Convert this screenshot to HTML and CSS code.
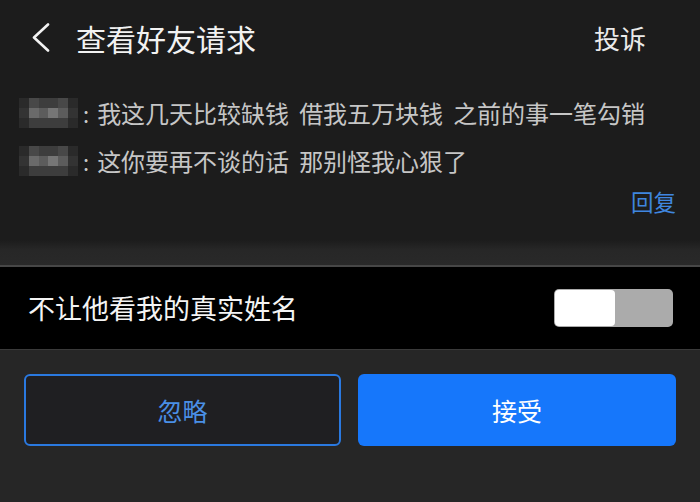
FILE: index.html
```html
<!DOCTYPE html>
<html lang="zh-CN">
<head>
<meta charset="utf-8">
<title>查看好友请求</title>
<link rel="stylesheet" href="styles.css">
</head>
<body>
<div class="page">
  <header class="header">
    <svg class="back" width="20" height="30" viewBox="0 0 20 30" aria-hidden="true">
      <polyline points="17,1.5 3,14.5 17,27.5" fill="none" stroke="#f2f2f2" stroke-width="2.6" stroke-linecap="round" stroke-linejoin="round"/>
    </svg>
    <h1 class="title">查看好友请求</h1>
    <span class="report">投诉</span>
  </header>

  <section class="messages">
    <div class="msg">
      <div class="mosaic">
        <i class="c1"></i><i class="c3"></i><i class="c2"></i><i class="c2"></i><i class="c3"></i><i class="c1"></i>
        <i class="c4"></i><i class="c6"></i><i class="c5"></i><i class="c7"></i><i class="c5"></i><i class="c4"></i>
        <i class="c1"></i><i class="c2"></i><i class="c2"></i><i class="c2"></i><i class="c2"></i><i class="c1"></i>
      </div>
      <span class="colon">:</span>
      <span class="text">我这几天比较缺钱<span class="sp"></span>借我五万块钱<span class="sp"></span>之前的事一笔勾销</span>
    </div>
    <div class="msg">
      <div class="mosaic">
        <i class="c1"></i><i class="c3"></i><i class="c2"></i><i class="c2"></i><i class="c3"></i><i class="c1"></i>
        <i class="c4"></i><i class="c6"></i><i class="c5"></i><i class="c7"></i><i class="c5"></i><i class="c4"></i>
        <i class="c1"></i><i class="c2"></i><i class="c2"></i><i class="c2"></i><i class="c2"></i><i class="c1"></i>
      </div>
      <span class="colon">:</span>
      <span class="text">这你要再不谈的话<span class="sp"></span>那别怪我心狠了</span>
    </div>
    <div class="reply-row"><span class="reply">回复</span></div>
  </section>

  <div class="band"></div>

  <section class="toggle-row">
    <span class="toggle-label">不让他看我的真实姓名</span>
    <div class="switch"><div class="knob"></div></div>
  </section>

  <section class="actions">
    <button class="btn btn-ignore">忽略</button>
    <button class="btn btn-accept">接受</button>
  </section>
</div>
</body>
</html>
```

FILE: styles.css
```css
* { box-sizing: border-box; }
html, body {
  margin: 0;
  padding: 0;
  background: #262626;
  font-family: "Noto Sans CJK SC", "Noto Sans", sans-serif;
}
.page {
  width: 700px;
  height: 502px;
  display: flex;
  flex-direction: column;
  overflow: hidden;
}
.header {
  height: 75px;
  background: #1c1c1c;
  display: flex;
  align-items: center;
  padding: 0 54px 0 31px;
}
.back { display: block; flex: none; }
.title {
  margin: 0 0 0 25px;
  font-size: 30px;
  font-weight: 400;
  color: #f2f2f2;
  line-height: 40px;
  flex: 1;
}
.report {
  font-size: 26px;
  color: #eaeaea;
  line-height: 36px;
}
.messages {
  background: #1c1c1c;
  padding: 14px 24px 24px 19px;
  display: flex;
  flex-direction: column;
}
.msg {
  height: 48px;
  display: flex;
  align-items: center;
}
.mosaic {
  width: 59px;
  height: 30px;
  display: grid;
  grid-template-columns: repeat(6, 1fr);
  grid-template-rows: repeat(3, 1fr);
  flex: none;
}
.mosaic i { display: block; }
.c1 { background: #2a2a2a; }
.c2 { background: #3d3d3d; }
.c3 { background: #484848; }
.c4 { background: #333333; }
.c5 { background: #5c5c5c; }
.c6 { background: #6a6a6a; }
.c7 { background: #767676; }
.colon {
  font-size: 22px;
  color: #c8c8c8;
  margin: 0 8px 0 5px;
  line-height: 30px;
}
.text {
  font-size: 24px;
  color: #c6c6c6;
  line-height: 30px;
  white-space: nowrap;
}
.sp { display: inline-block; width: 10px; }
.reply-row {
  display: flex;
  justify-content: flex-end;
  margin-top: 1px;
}
.reply {
  font-size: 22.5px;
  color: #3f86df;
  line-height: 30px;
}
.band {
  height: 25px;
  background: linear-gradient(#1c1c1c, #272727 40%, #292929);
}
.toggle-row {
  height: 85px;
  background: #000;
  border-top: 2px solid #474747;
  border-bottom: 1px solid #3a3a3a;
  display: flex;
  align-items: center;
  justify-content: space-between;
  padding: 0 27px 0 28px;
}
.toggle-label {
  font-size: 27px;
  color: #f4f4f4;
  line-height: 36px;
}
.switch {
  width: 119px;
  height: 38px;
  background: #ababab;
  border-radius: 5px;
  padding: 1px;
}
.knob {
  width: 60px;
  height: 36px;
  background: #ffffff;
  border-radius: 4px;
}
.actions {
  flex: 1;
  background: #262626;
  display: flex;
  gap: 17px;
  padding: 24px 24px 0 24px;
}
.btn {
  flex: none;
  height: 72px;
  border-radius: 6px;
  font-family: inherit;
  font-size: 25px;
  font-weight: 400;
  margin: 0;
  padding: 0;
}
.btn-ignore {
  width: 317px;
  background: #1f1f22;
  border: 2px solid #2a79e0;
  color: #4a8fe6;
}
.btn-accept {
  width: 318px;
  background: #1677fb;
  border: none;
  color: #ffffff;
}
```
